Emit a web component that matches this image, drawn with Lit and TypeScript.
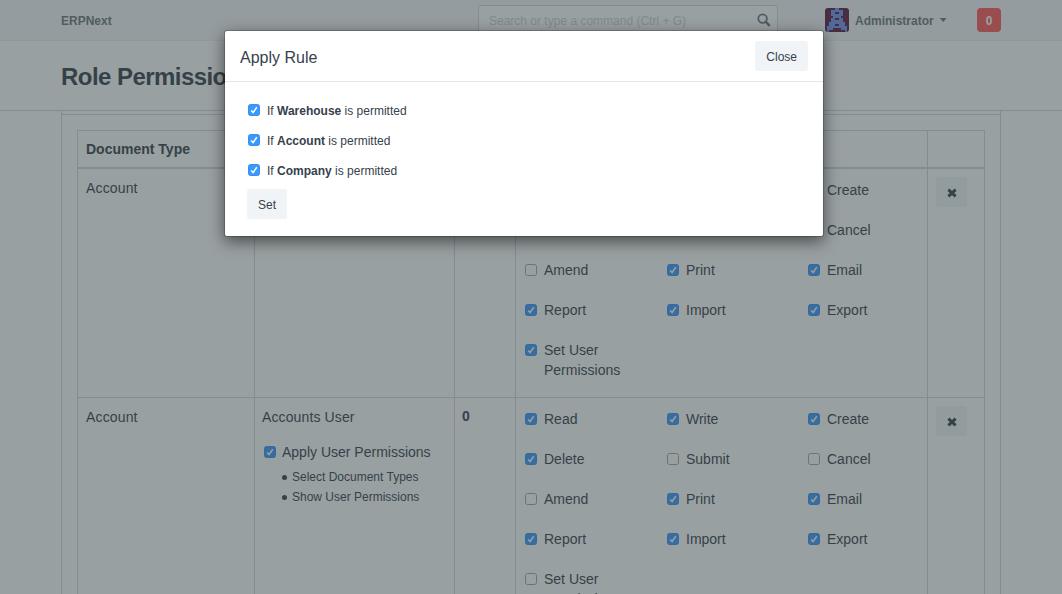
import { LitElement, html, css, svg } from "lit";
import { customElement, property } from "lit/decorators.js";

@customElement("check-box")
class CheckBox extends LitElement {
  @property({ type: Boolean }) checked = false;
  static styles = css`
    :host { display: block; flex: none; width: 12px; height: 12px; }
    .box {
      box-sizing: border-box; width: 12px; height: 12px; border-radius: 2.5px;
      border: 1px solid #a4a4a4; background: #fff;
    }
    .on { background: #3b99fc; border-color: #3690f3; }
    svg { display: block; width: 10px; height: 10px; }
  `;
  render() {
    return this.checked
      ? html`<div class="box on"><svg viewBox="0 0 10 10"><path d="M2.2 5.4 4.1 7.5 7.8 2.3" fill="none" stroke="#fff" stroke-width="1.5"/></svg></div>`
      : html`<div class="box"></div>`;
  }
}

const AVATAR = [
  ".....##.....",
  "...######...",
  "...##..##...",
  "...######...",
  "....####....",
  "...##..##...",
  "...######...",
  "..########..",
  "..###..###..",
  ".##########.",
  ".###....###.",
  ".#........#.",
];

type Perm = [string, boolean];
interface Rule { doc: string; role: string; level: string; apply: boolean; perms: Perm[]; }

const RULES: Rule[] = [
  {
    doc: "Account", role: "Accounts Manager", level: "0", apply: false,
    perms: [["Read", true], ["Write", true], ["Create", true], ["Delete", true], ["Submit", false], ["Cancel", false],
      ["Amend", false], ["Print", true], ["Email", true], ["Report", true], ["Import", true], ["Export", true],
      ["Set User Permissions", true]],
  },
  {
    doc: "Account", role: "Accounts User", level: "0", apply: true,
    perms: [["Read", true], ["Write", true], ["Create", true], ["Delete", true], ["Submit", false], ["Cancel", false],
      ["Amend", false], ["Print", true], ["Email", true], ["Report", true], ["Import", true], ["Export", true],
      ["Set User Permissions", false]],
  },
];

@customElement("app-root")
class AppRoot extends LitElement {
  static styles = css`
    :host {
      display: block; position: relative; width: 1062px; height: 594px; overflow: hidden;
      background: #fff; color: #36414c;
      font: 14px/20px "Liberation Sans", Arial, sans-serif;
    }
    * { box-sizing: border-box; }
    .nav {
      display: flex; height: 41px; padding: 0 61px; background: #f5f7fa; border-bottom: 1px solid #ebeff2;
      color: #6c7680; font-size: 12px; font-weight: bold; line-height: 42px;
    }
    .brand { width: 417px; }
    .search {
      display: flex; align-items: center; width: 300px; height: 30px; margin-top: 5px; padding: 0 6px 0 10px;
      justify-content: space-between; background: #fff; border: 1px solid #d1d8dd; border-radius: 3px;
      font-weight: normal; color: #cbd2d7; line-height: 20px;
    }
    .search span { padding-top: 2px; }
    .search svg { width: 14px; height: 14px; }
    .avatar { width: 24px; height: 24px; margin: 8px 6px 0 47px; border-radius: 3px; }
    .caret {
      width: 7px; height: 4px; margin: 18px 0 0 6px; background: #6c7680;
      clip-path: polygon(0 0, 100% 0, 50% 100%);
    }
    .badge {
      width: 24px; height: 24px; margin: 8px 0 0 auto; border-radius: 4px; background: #ff5858;
      color: #fff; text-align: center; line-height: 26px;
    }
    .head {
      height: 70px; padding: 22px 61px 0; border-bottom: 1px solid #d1d8dd;
      font-size: 24px; line-height: 28px; font-weight: bold; letter-spacing: -0.55px; white-space: nowrap;
    }
    .page { width: 940px; height: 520px; margin-left: 61px; border: 1px solid #d1d8dd; border-width: 0 1px; padding-top: 3px; }
    .section { border-top: 1px solid #d1d8dd; padding: 15px 15px 0; }
    .table { width: 908px; border: 1px solid #d1d8dd; }
    .row { display: grid; grid-template-columns: 176px 200px 61px 412px 57px; }
    .row > * { border-left: 1px solid #d1d8dd; }
    .row > :first-child { border-left: 0; }
    .th { height: 38px; border-bottom: 2px solid #d1d8dd; font-weight: bold; }
    .th > * { padding: 8px 8px 0; }
    .rule { height: 229px; border-bottom: 1px solid #d1d8dd; }
    .cell { padding: 9px 8px 0 7px; }
    .doc { padding-left: 8px; letter-spacing: 0.15px; }
    .role { letter-spacing: 0.12px; }
    .tools { padding: 8px 8px 0; }
    .level { font-weight: bold; padding-top: 8px; }
    .apply { display: flex; align-items: center; gap: 6px; margin: 15px 0 0 2px; white-space: nowrap; }
    .links { margin: 5px 0 0; padding: 0 0 0 20px; list-style: none; font-size: 12px; }
    .links li { display: flex; align-items: center; gap: 5px; white-space: nowrap; }
    .links li::before { content: ""; width: 5px; height: 5px; border-radius: 50%; background: #36414c; }
    .perms {
      display: grid; grid-template-columns: 142px 141px 120px; grid-auto-rows: 20px; row-gap: 20px;
      padding: 11px 0 0 9px; height: 228px; overflow: hidden;
    }
    .perm { display: flex; align-items: flex-start; gap: 7px; }
    .perm check-box { margin-top: 4px; }
    .perm span { width: 95px; }
    .remove {
      display: grid; place-items: center; width: 31px; height: 30px; background: #f0f4f7; border-radius: 3px;
    }
    .remove svg { width: 10px; height: 10px; margin-top: 2px; }
    .backdrop { position: absolute; inset: 0; background: rgba(51, 65, 67, 0.5); }
    .modal {
      position: absolute; left: 224px; top: 30px; width: 600px; height: 207px; background: #fff;
      background-clip: padding-box; border: 1px solid rgba(0, 0, 0, 0.2); border-radius: 3px;
      box-shadow: 0 5px 15px rgba(0, 0, 0, 0.5); font-size: 12px;
    }
    .mhead {
      display: flex; justify-content: space-between; height: 51px; padding: 10px 15px 0;
      border-bottom: 1px solid #e5e5e5;
    }
    .title { font-size: 16px; line-height: 33px; }
    .btn { height: 30px; padding: 0 11px; background: #f0f4f7; border-radius: 3px; line-height: 32px; width: fit-content; }
    .mbody { padding: 14px 22px 0; }
    .opt { display: flex; align-items: center; gap: 7px; height: 30px; padding-left: 1px; }
    .opt check-box { margin-bottom: 2px; }
    .set { margin-top: 3px; }
  `;

  private rule(r: Rule) {
    return html`<div class="row rule">
      <div class="cell doc">${r.doc}</div>
      <div class="cell">
        <div class="role">${r.role}</div>
        ${r.apply ? html`
          <div class="apply"><check-box checked></check-box><span>Apply User Permissions</span></div>
          <ul class="links"><li>Select Document Types</li><li>Show User Permissions</li></ul>` : null}
      </div>
      <div class="cell level">${r.level}</div>
      <div class="perms">
        ${r.perms.map(([name, on]) => html`<div class="perm"><check-box ?checked=${on}></check-box><span>${name}</span></div>`)}
      </div>
      <div class="tools"><div class="remove">
        <svg viewBox="0 0 10 10"><path d="M1.4 1.6 8.6 8.4M8.6 1.6 1.4 8.4" stroke="#36414c" stroke-width="2.9"/></svg>
      </div></div>
    </div>`;
  }

  render() {
    return html`
      <div class="nav">
        <div class="brand">ERPNext</div>
        <div class="search"><span>Search or type a command (Ctrl + G)</span>
          <svg viewBox="0 0 14 14" fill="none" stroke="#6c7680"><circle cx="5.6" cy="5.6" r="4.3" stroke-width="1.8"/><path d="M8.8 8.8 12.8 12.8" stroke-width="2.4"/></svg>
        </div>
        <svg class="avatar" viewBox="0 0 12 12" shape-rendering="crispEdges">
          <rect width="12" height="12" fill="#5f1a42"/>
          ${AVATAR.flatMap((line, y) => [...line].map((c, x) => c === "#" ? svg`<rect x=${x} y=${y} width="1" height="1" fill="#6f93f0"/>` : null))}
        </svg>
        <span class="user">Administrator</span><i class="caret"></i>
        <div class="badge">0</div>
      </div>
      <div class="head">Role Permissions Manager</div>
      <div class="page"><div class="section"><div class="table">
        <div class="row th"><div>Document Type</div><div>Role</div><div>Level</div><div>Permissions</div><div></div></div>
        ${RULES.map((r) => this.rule(r))}
      </div></div></div>
      <div class="backdrop"></div>
      <div class="modal">
        <div class="mhead"><div class="title">Apply Rule</div><div class="btn">Close</div></div>
        <div class="mbody">
          ${["Warehouse", "Account", "Company"].map((n) => html`<div class="opt"><check-box checked></check-box><span>If <b>${n}</b> is permitted</span></div>`)}
          <div class="btn set">Set</div>
        </div>
      </div>`;
  }
}
